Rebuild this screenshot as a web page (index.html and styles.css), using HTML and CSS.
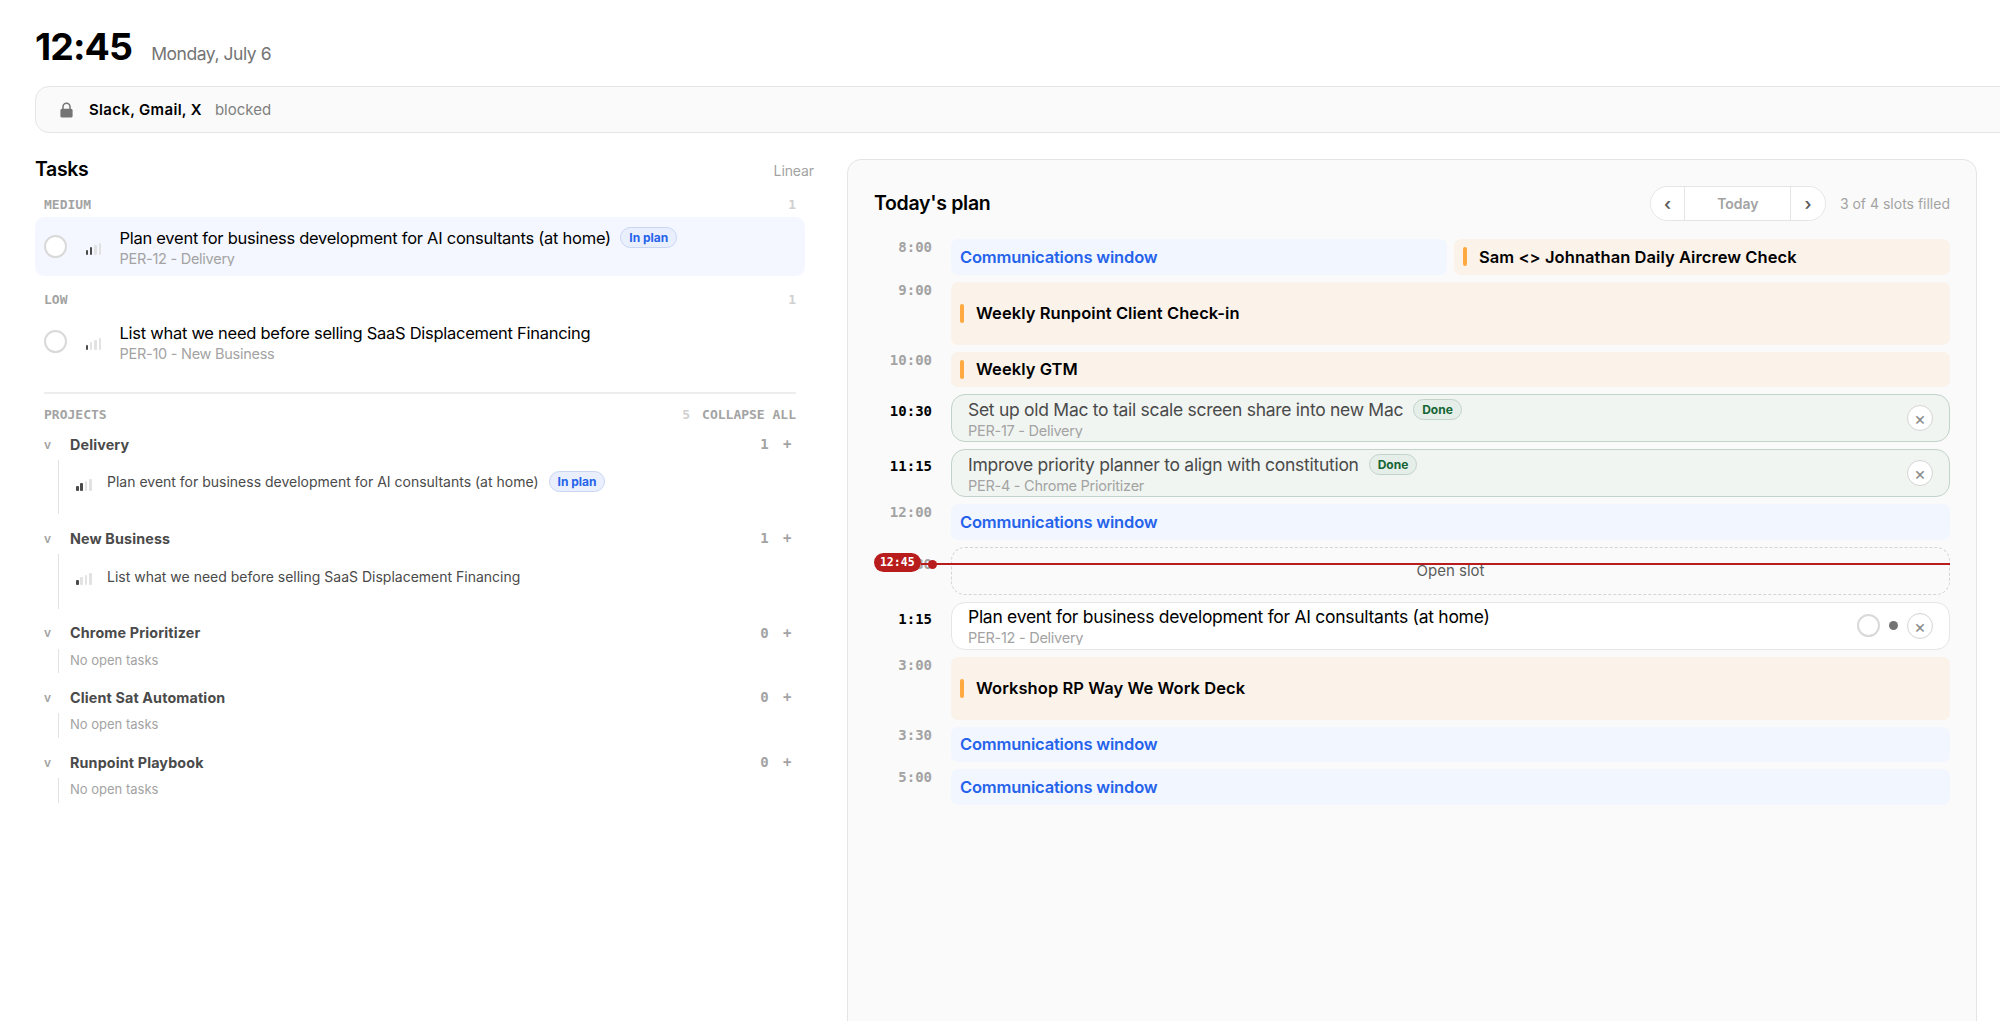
FILE: index.html
```html
<!DOCTYPE html>
<html lang="en">
<head>
    <meta charset="UTF-8">
    <meta name="viewport" content="width=device-width, initial-scale=1.0">
    <title>Today's plan</title>
    <link rel="stylesheet" href="styles.css">
</head>
<body>
    <header class="top">
        <span class="clock">12:45</span>
        <span class="date">Monday, July 6</span>
    </header>

    <div class="blocked">
        <svg class="lock" viewBox="0 0 13 16" width="13" height="16">
            <path d="M3 7.5V4.8a3.5 3.5 0 0 1 7 0v2.7" fill="none" stroke="#747474" stroke-width="1.5"/>
            <rect x="0.4" y="6.8" width="12.2" height="8.8" rx="1.6" fill="#747474"/>
        </svg>
        <strong>Slack, Gmail, X</strong>
        <span>blocked</span>
    </div>

    <main class="columns">
        <section class="tasks">
            <div class="tasks-head">
                <h2>Tasks</h2>
                <span class="source">Linear</span>
            </div>

            <div class="list">
                <div class="group-head"><span>MEDIUM</span><span class="count">1</span></div>
                <div class="task selected">
                    <span class="check"></span>
                    <span class="bars"><i class="on"></i><i class="on"></i><i></i><i></i></span>
                    <div class="task-text">
                        <div class="task-title"><span>Plan event for business development for AI consultants (at home)</span><span class="badge">In plan</span></div>
                        <div class="task-sub">PER-12 - Delivery</div>
                    </div>
                </div>

                <div class="group-head second"><span>LOW</span><span class="count">1</span></div>
                <div class="task">
                    <span class="check"></span>
                    <span class="bars"><i class="on"></i><i></i><i></i><i></i></span>
                    <div class="task-text">
                        <div class="task-title"><span>List what we need before selling SaaS Displacement Financing</span></div>
                        <div class="task-sub">PER-10 - New Business</div>
                    </div>
                </div>

                <div class="projects">
                    <div class="projects-head">
                        <span>PROJECTS</span>
                        <span class="count">5</span>
                        <span class="collapse">COLLAPSE ALL</span>
                    </div>

                    <div class="project">
                        <div class="project-head"><span class="arrow">v</span><b>Delivery</b><span class="num">1</span><span class="add">+</span></div>
                        <div class="project-body">
                            <div class="subtask">
                                <span class="bars"><i class="on"></i><i class="on"></i><i></i><i></i></span>
                                <span class="subtask-title">Plan event for business development for AI consultants (at home)</span>
                                <span class="badge">In plan</span>
                            </div>
                        </div>
                    </div>
                    <div class="project">
                        <div class="project-head"><span class="arrow">v</span><b>New Business</b><span class="num">1</span><span class="add">+</span></div>
                        <div class="project-body">
                            <div class="subtask">
                                <span class="bars"><i class="on"></i><i></i><i></i><i></i></span>
                                <span class="subtask-title">List what we need before selling SaaS Displacement Financing</span>
                            </div>
                        </div>
                    </div>
                    <div class="project">
                        <div class="project-head"><span class="arrow">v</span><b>Chrome Prioritizer</b><span class="num">0</span><span class="add">+</span></div>
                        <div class="project-body empty">No open tasks</div>
                    </div>
                    <div class="project">
                        <div class="project-head"><span class="arrow">v</span><b>Client Sat Automation</b><span class="num">0</span><span class="add">+</span></div>
                        <div class="project-body empty">No open tasks</div>
                    </div>
                    <div class="project">
                        <div class="project-head"><span class="arrow">v</span><b>Runpoint Playbook</b><span class="num">0</span><span class="add">+</span></div>
                        <div class="project-body empty">No open tasks</div>
                    </div>
                </div>
            </div>
        </section>

        <section class="plan">
            <div class="plan-head">
                <h2>Today's plan</h2>
                <div class="nav">
                    <button class="arrow-btn">‹</button>
                    <button class="today">Today</button>
                    <button class="arrow-btn">›</button>
                </div>
                <span class="filled">3 of 4 slots filled</span>
            </div>

            <div class="timeline">
                <div class="row">
                    <span class="time">8:00</span>
                    <div class="block comms">Communications window</div>
                    <div class="block meeting">Sam &lt;&gt; Johnathan Daily Aircrew Check</div>
                </div>
                <div class="row tall">
                    <span class="time">9:00</span>
                    <div class="block meeting">Weekly Runpoint Client Check-in</div>
                </div>
                <div class="row">
                    <span class="time">10:00</span>
                    <div class="block meeting">Weekly GTM</div>
                </div>
                <div class="row slot">
                    <span class="time">10:30</span>
                    <div class="card done">
                        <div class="card-text">
                            <div class="card-title"><span>Set up old Mac to tail scale screen share into new Mac</span><span class="badge green">Done</span></div>
                            <div class="task-sub">PER-17 - Delivery</div>
                        </div>
                        <button class="remove">×</button>
                    </div>
                </div>
                <div class="row slot">
                    <span class="time">11:15</span>
                    <div class="card done">
                        <div class="card-text">
                            <div class="card-title"><span>Improve priority planner to align with constitution</span><span class="badge green">Done</span></div>
                            <div class="task-sub">PER-4 - Chrome Prioritizer</div>
                        </div>
                        <button class="remove">×</button>
                    </div>
                </div>
                <div class="row">
                    <span class="time">12:00</span>
                    <div class="block comms">Communications window</div>
                </div>
                <div class="row slot open">
                    <span class="time">12:30</span>
                    <div class="card">Open slot</div>
                </div>
                <div class="row slot">
                    <span class="time">1:15</span>
                    <div class="card">
                        <div class="card-text">
                            <div class="card-title"><span>Plan event for business development for AI consultants (at home)</span></div>
                            <div class="task-sub">PER-12 - Delivery</div>
                        </div>
                        <span class="check"></span>
                        <span class="dot"></span>
                        <button class="remove">×</button>
                    </div>
                </div>
                <div class="row tall">
                    <span class="time">3:00</span>
                    <div class="block meeting">Workshop RP Way We Work Deck</div>
                </div>
                <div class="row">
                    <span class="time">3:30</span>
                    <div class="block comms">Communications window</div>
                </div>
                <div class="row">
                    <span class="time">5:00</span>
                    <div class="block comms">Communications window</div>
                </div>

                <div class="now"><span class="now-label">12:45</span></div>
            </div>
        </section>
    </main>
</body>
</html>
```
FILE: styles.css
```css
* {
    box-sizing: border-box;
}

body {
    margin: 0;
    padding: 24px 23px 0 35px;
    height: 1021px;
    overflow: hidden;
    background: #fff;
    color: #000;
    font-family: Inter, sans-serif;
}

h2 {
    margin: 0;
    font-size: 19.5px;
    line-height: 20px;
    font-weight: 600;
    letter-spacing: -0.35px;
}

button {
    padding: 0;
    border: none;
    background: #fff;
    font-family: inherit;
}

.top {
    display: flex;
    align-items: baseline;
    gap: 19px;
    height: 46px;
    line-height: 46px;
}

.clock {
    font-size: 37.5px;
    font-weight: 650;
    letter-spacing: -0.9px;
}

.date {
    font-size: 17.5px;
    letter-spacing: -0.45px;
    color: #747474;
}

.blocked {
    display: flex;
    align-items: center;
    height: 47px;
    margin: 16px -60px 0 0;
    padding-left: 24px;
    border: 1px solid #e5e5e5;
    border-radius: 14px;
    background: #fafafa;
    font-size: 15px;
}

.blocked strong {
    margin: 0 13px 0 16px;
    font-weight: 600;
    letter-spacing: 0.32px;
}

.blocked span {
    color: #808080;
}

.columns {
    display: flex;
    gap: 33px;
    margin-top: 26px;
}

/* tasks column */
.tasks {
    width: 779px;
}

.tasks-head {
    display: flex;
    justify-content: space-between;
    align-items: baseline;
    height: 20px;
    margin-bottom: 15px;
}

.source {
    font-size: 14px;
    line-height: 20px;
    letter-spacing: -0.1px;
    color: #a3a3a3;
}

.list {
    width: 770px;
}

.group-head,
.projects-head {
    display: flex;
    justify-content: space-between;
    height: 23px;
    padding: 0 9px;
    font: bold 13px/21px "DejaVu Sans Mono", monospace;
    color: #a3a3a3;
}

.group-head.second {
    margin-top: 13px;
}

.count {
    color: #d0d0d0;
}

.task {
    display: flex;
    align-items: center;
    height: 59px;
    padding-left: 9px;
    border-radius: 9px;
}

.task.selected {
    background: #f4f7ff;
}

.check {
    width: 23px;
    height: 23px;
    border: 2px solid #d9d9d9;
    border-radius: 50%;
    background: #fff;
}

.bars {
    display: flex;
    align-items: flex-end;
    gap: 1.8px;
    width: 16px;
    height: 12px;
}

.bars i {
    width: 2.6px;
    height: 5px;
    border-radius: 1px;
    background: #e2e2e2;
}

.bars i:nth-child(2) { height: 8px; }
.bars i:nth-child(3) { height: 10px; }
.bars i:nth-child(4) { height: 12px; }

.bars i.on {
    background: #4a4a4a;
}

.task .bars {
    margin: 5px 18px 0 18.5px;
}

.task-text {
    align-self: flex-start;
    height: 39px;
    margin-top: 10px;
    overflow: hidden;
}

.task-title {
    display: flex;
    align-items: center;
    gap: 9.5px;
    height: 21px;
    font-size: 16.5px;
    letter-spacing: -0.27px;
}

.task-sub {
    font-size: 14.5px;
    line-height: 21px;
    letter-spacing: -0.26px;
    color: #a3a3a3;
}

.badge {
    height: 21px;
    padding: 0 8px;
    border: 1px solid #c9d5f3;
    border-radius: 11px;
    background: #e9effd;
    color: #2563eb;
    font-size: 12px;
    line-height: 19px;
    font-weight: 700;
    letter-spacing: 0;
}

.badge.green {
    border-color: #c2d3c9;
    background: #e5eee9;
    color: #166534;
}

.projects {
    margin: 21px 9px 0;
    border-top: 2px solid #ededed;
    padding-top: 10px;
}

.projects-head {
    padding: 0;
    margin-bottom: 3px;
}

.projects-head .count {
    margin-left: auto;
    margin-right: 12px;
}

.project {
    margin-bottom: 10px;
}

.project-head {
    display: flex;
    align-items: center;
    height: 30px;
    padding-bottom: 2px;
    font-size: 14.3px;
    letter-spacing: 0.15px;
    color: #4a4a4a;
}

.arrow {
    width: 26px;
    font-size: 12px;
    font-weight: 600;
    color: #a3a3a3;
}

.num,
.add {
    font: bold 14px "DejaVu Sans Mono", monospace;
    color: #a3a3a3;
}

.num {
    margin-left: auto;
    margin-right: 14px;
}

.add {
    margin-right: 4.5px;
}

.project-body {
    height: 54.4px;
    margin-left: 14px;
    padding: 7.7px 0 0 17px;
    border-left: 1px solid #e2e2e2;
}

.project-body.empty {
    height: 24.7px;
    padding: 0 0 0 11px;
    font-size: 13px;
    line-height: 23px;
    color: #a3a3a3;
}

.subtask {
    display: flex;
    align-items: center;
    height: 28px;
}

.subtask .bars {
    margin-top: 6px;
}

.subtask-title {
    margin: 0 10px 0 15px;
    font-size: 14px;
    color: #4a4a4a;
}

/* plan column */
.plan {
    width: 1130px;
    height: 900px;
    padding: 26px 26px 0;
    border: 1px solid #e5e5e5;
    border-radius: 14px;
    background: #fafafa;
}

.plan-head {
    display: flex;
    align-items: center;
    height: 35px;
}

.plan-head h2 {
    padding-bottom: 2px;
    letter-spacing: -0.3px;
}

.nav {
    display: flex;
    width: 176px;
    height: 35px;
    margin-left: auto;
    border: 1px solid #e5e5e5;
    border-radius: 18px;
    overflow: hidden;
}

.arrow-btn {
    width: 33.5px;
    font-size: 17px;
    font-weight: 600;
    color: #5c5c5c;
}

.today {
    flex: 1;
    border: solid #e5e5e5;
    border-width: 0 1px;
    font-size: 14px;
    font-weight: 600;
    color: #a3a3a3;
}

.filled {
    margin-left: 14px;
    font-size: 14px;
    color: #a3a3a3;
}

.timeline {
    position: relative;
    display: flex;
    flex-direction: column;
    gap: 7px;
    margin-top: 18px;
}

.row {
    display: flex;
    gap: 7px;
    height: 35.5px;
}

.row.tall { height: 63px; }
.row.slot { height: 48px; }

.time {
    width: 58px;
    margin-right: 12px;
    font: bold 14px/16px "DejaVu Sans Mono", monospace;
    text-align: right;
    color: #a3a3a3;
}

.slot .time {
    padding-top: 9px;
    color: #000;
}

.open .time {
    color: #a3a3a3;
}

.block {
    flex: 1;
    display: flex;
    align-items: center;
    padding: 0 9px;
    border-radius: 7px;
    font-size: 16.5px;
    font-weight: 600;
}

.comms {
    background: #f2f6ff;
    color: #2563eb;
    letter-spacing: -0.19px;
}

.meeting {
    background: #fbf2e9;
    letter-spacing: 0.06px;
}

.meeting::before {
    content: "";
    width: 4px;
    height: 19px;
    margin-right: 12px;
    border-radius: 2px;
    background: #ffa940;
}

.card {
    flex: 1;
    display: flex;
    align-items: center;
    padding: 0 16px;
    border: 1px solid #e5e5e5;
    border-radius: 14px;
    background: #fff;
}

.card.done {
    border-color: #c2d3c9;
    background: #f1f5f2;
}

.open .card {
    justify-content: center;
    border: 1px dashed #d4d4d4;
    background: none;
    font-size: 15px;
    color: #5c5c5c;
}

.card-text {
    align-self: flex-start;
    height: 39px;
    margin: 3.5px auto 0 0;
    overflow: hidden;
}

.card-title {
    display: flex;
    align-items: center;
    gap: 10px;
    height: 21px;
    font-size: 17.5px;
    letter-spacing: -0.28px;
}

.done .card-title {
    color: #4a4a4a;
}

.dot {
    width: 9px;
    height: 9px;
    margin: 0 9px;
    border-radius: 50%;
    background: #747474;
}

.remove {
    width: 26px;
    height: 26px;
    border: 1px solid #d4d4d4;
    border-radius: 50%;
    font-size: 18px;
    line-height: 26px;
    color: #8a8a8a;
}

/* current time marker */
.now {
    position: absolute;
    top: 324px;
    left: 47px;
    right: 0;
    height: 2px;
    background: #b91c1c;
}

.now::before {
    content: "";
    position: absolute;
    left: 6.5px;
    top: -3.5px;
    width: 9px;
    height: 9px;
    border-radius: 50%;
    background: #b91c1c;
}

.now-label {
    position: absolute;
    left: -47.5px;
    top: -10px;
    width: 47.5px;
    height: 19px;
    border-radius: 10px;
    background: #b91c1c;
    color: #fff;
    font: bold 11.5px/19px "DejaVu Sans Mono", monospace;
    text-align: center;
}
```
